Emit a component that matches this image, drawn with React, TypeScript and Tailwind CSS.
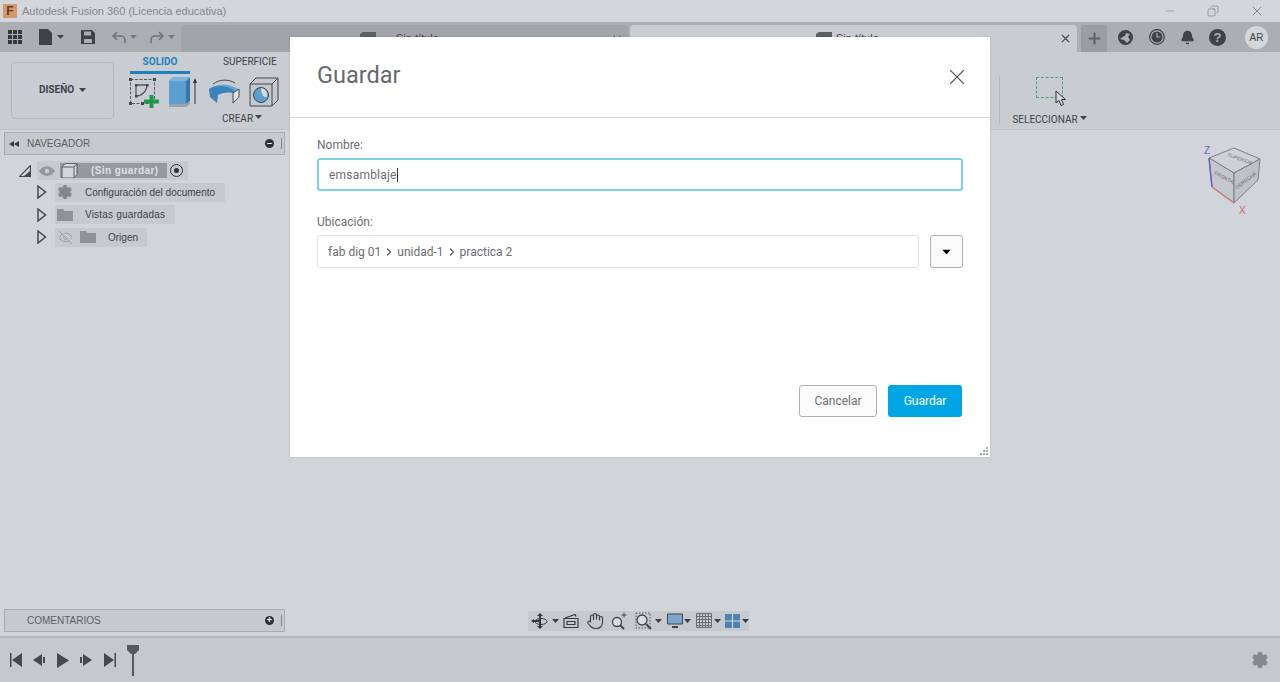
import type { ReactNode } from 'react';
import { Bell, ChevronRight, Copy, EyeOff, Minus, Plus, Settings, X } from 'lucide-react';

const Caret = ({ className = '' }: { className?: string }) => (
  <svg width="7" height="4" viewBox="0 0 7 4" className={className}>
    <path d="M0 0h7L3.500 4z" fill="currentColor" />
  </svg>
);

const Folder = () => (
  <svg width="16" height="12" viewBox="0 0 16 12">
    <path d="M0 0h6l1.500 2H16v10H0z" fill="#8f9296" />
  </svg>
);

const Eye = () => (
  <svg width="16" height="10" viewBox="0 0 16 10">
    <path d="M0 5c4-6.500 12-6.500 16 0-4 6.500-12 6.500-16 0z" fill="#96999d" />
    <circle cx="8" cy="5" r="2.200" fill="#c9ccd0" />
  </svg>
);

const Expander = () => (
  <svg width="10" height="14" viewBox="0 0 10 14" className="shrink-0">
    <path d="M1 1l7.500 6L1 13z" fill="none" stroke="#45484c" strokeWidth="1.500" />
  </svg>
);

const TabIcon = () => (
  <svg width="16" height="13" viewBox="0 0 16 13">
    <path d="M0 2l3-2h13v11l-2 2H0z" fill="#5c5f63" />
  </svg>
);

function TreeRow({ icon, label, labelClass }: { icon: ReactNode; label: string; labelClass: string }) {
  return (
    <div className="flex items-center h-[22.500px] pl-[37px]">
      <Expander />
      <div className="ml-[8px] h-[19px] flex items-center bg-[#c6c9cd] text-[10px] text-[#3f4246]">
        {icon}
        <span className={labelClass}>{label}</span>
      </div>
    </div>
  );
}

function Panel({ title, sign, back }: { title: string; sign: string; back?: boolean }) {
  return (
    <div className="mx-[4px] w-[281px] h-[23px] flex items-center bg-[#c6c9cd] border border-[#a9acb0] text-[10px] text-[#5c5f63]">
      <span className="w-[22px] pl-[4px] flex">
        {back && (
          <svg width="10" height="6" viewBox="0 0 10 6">
            <path d="M5 0v6L0 3zM10 0v6L5 3z" fill="#3a3d40" />
          </svg>
        )}
      </span>
      <span className="flex-1">{title}</span>
      <span className="w-[9px] h-[9px] rounded-full bg-[#2f3235] text-white text-[9px] leading-[8px] text-center font-bold">{sign}</span>
      <span className="w-[1px] h-[11px] ml-[7px] mr-[2px] bg-[#85888c]" />
    </div>
  );
}

function ViewIcons() {
  return (
    <div className="flex items-center h-[20px] w-[221px] bg-[#c6c9cd] pl-[2px] text-[#3a3d40]">
      <svg width="20" height="18" viewBox="0 0 20 18">
        <path d="M10 1l3 3h-2v10h2l-3 3-3-3h2V4H7z" fill="#33363a" />
        <path d="M1 9l3-2v1h6v2H4v1z" fill="#33363a" />
        <ellipse cx="11" cy="9.500" rx="6" ry="3" fill="none" stroke="#33363a" />
      </svg>
      <Caret className="ml-[2px]" />
      <svg width="16" height="15" viewBox="0 0 16 15" className="ml-[4px]">
        <path d="M1 5.500h14v9H1zM4 8.500h8v3H4zM2 5l10-3.500 1 2" fill="none" stroke="#3a3d40" strokeWidth="1.200" />
      </svg>
      <svg width="18" height="18" viewBox="0 0 24 24" className="ml-[7px]" fill="none" stroke="#3a3d40" strokeWidth="1.500">
        <path d="M18 11V6a2 2 0 0 0-4 0M14 10V4a2 2 0 0 0-4 0v2M10 10.500V6a2 2 0 0 0-4 0v8M18 8a2 2 0 1 1 4 0v6a8 8 0 0 1-8 8h-2c-3 0-4-1-6-3l-3.500-4a2 2 0 0 1 3-2.500L6 14" />
      </svg>
      <svg width="18" height="18" viewBox="0 0 18 18" className="ml-[6px]" fill="none">
        <circle cx="7" cy="10" r="4.500" fill="#d8dee4" stroke="#44474b" strokeWidth="1.300" />
        <path d="M10 13l4 4" stroke="#44474b" strokeWidth="2" />
        <path d="M11.500 3h5M14 .5v5" stroke="#44474b" strokeWidth="1" />
      </svg>
      <svg width="18" height="18" viewBox="0 0 18 18" className="ml-[7px]" fill="none">
        <path d="M1 1h14v15H1z" stroke="#55585c" strokeDasharray="1.500 1.500" />
        <circle cx="7" cy="8" r="5" fill="#d8dee4" stroke="#44474b" strokeWidth="1.300" />
        <path d="M11 12l5 5" stroke="#44474b" strokeWidth="2" />
      </svg>
      <Caret className="ml-[2px]" />
      <svg width="16" height="16" viewBox="0 0 16 16" className="ml-[5px]">
        <path d="M.500 1h15v10H.500z" fill="#7fa6cc" stroke="#44474b" />
        <path d="M5 14h6" stroke="#44474b" strokeWidth="2" />
      </svg>
      <Caret className="ml-[1px]" />
      <svg width="16" height="15" viewBox="0 0 16 15" className="ml-[5px]">
        <path d="M.500.500h15v14H.500zM3.500 0v15M6.500 0v15M9.500 0v15M12.500 0v15M0 3.500h16M0 6.500h16M0 9.500h16M0 12.500h16" fill="none" stroke="#6b6e72" />
      </svg>
      <Caret className="ml-[2px]" />
      <svg width="15" height="14" viewBox="0 0 15 14" className="ml-[4px]">
        <rect width="15" height="14" fill="#4d82b8" />
        <path d="M7.500 0v14M0 7h15" stroke="#d5d8dc" strokeWidth="1.200" />
      </svg>
      <Caret className="ml-[2px]" />
    </div>
  );
}

export default function App() {
  return (
    <div className="relative w-[1280px] h-[682px] flex flex-col overflow-hidden bg-[#d1d4d8] font-['Liberation_Sans',sans-serif]">
      {/* Window title */}
      <header className="h-[22px] shrink-0 flex items-center bg-[#d3d6da] text-[#85888c]">
        <span className="ml-[3px] w-[14px] h-[14px] bg-[#d29a69] text-[#5f3d20] text-[12px] leading-[14px] font-bold text-center">F</span>
        <span className="ml-[5px] flex-1 text-[11px]">Autodesk Fusion 360 (Licencia educativa)</span>
        <Minus size={14} strokeWidth={1} className="text-[#85888c]" />
        <Copy size={12} strokeWidth={1} className="ml-[30px] text-[#5c5f63] -scale-x-100" />
        <X size={16} strokeWidth={1} className="ml-[30px] mr-[15px] text-[#5c5f63]" />
      </header>

      {/* Quick access and tabs */}
      <div className="h-[30px] shrink-0 flex items-center bg-[#acafb2] text-[#3f4246]">
        <div className="ml-[8px] w-[14px] h-[14px] grid grid-cols-3 gap-[1px]">
          {Array.from({ length: 9 }).map((_, i) => (
            <span key={i} className="bg-[#34373a]" />
          ))}
        </div>
        <svg width="14" height="16" viewBox="0 0 14 16" className="ml-[17px]">
          <path d="M0 0h9l4 4v12H0z" fill="#3f4246" />
        </svg>
        <Caret className="ml-[4px]" />
        <svg width="14" height="14" viewBox="0 0 14 14" className="ml-[17px]">
          <path d="M0 0h11l3 3v11H0zM3 1.500v4h7v-4zM3 9v4h8V9z" fill="#3f4246" fillRule="evenodd" />
        </svg>
        <svg width="14" height="12" viewBox="0 0 14 12" className="ml-[17px]" fill="none" stroke="#6d7074" strokeWidth="1.500">
          <path d="M5 1L1 5l4 4M1 5h8a4 4 0 0 1 4 4v3" />
        </svg>
        <Caret className="ml-[4px] text-[#77797d]" />
        <svg width="14" height="12" viewBox="0 0 14 12" className="ml-[13px]" fill="none" stroke="#6d7074" strokeWidth="1.500">
          <path d="M9 1l4 4-4 4M13 5H5a4 4 0 0 0-4 4v3" />
        </svg>
        <Caret className="ml-[4px] text-[#77797d]" />

        <div className="ml-[6px] self-end h-[27px] w-[447px] rounded-t-[4px] bg-[#a1a4a8] flex items-center pr-[5px] text-[11px] text-[#45484c]">
          <span className="ml-[179px] flex"><TabIcon /></span>
          <span className="ml-[20px] flex-1">Sin título</span>
          <X size={12} className="text-[#4a4d50]" />
        </div>
        <div className="ml-[2px] self-end h-[27px] w-[447px] rounded-t-[4px] bg-[#c9ccd0] flex items-center pr-[5px] text-[11px] text-[#45484c]">
          <span className="ml-[186px] flex"><TabIcon /></span>
          <span className="ml-[4px] flex-1">Sin título</span>
          <X size={13} className="text-[#4a4d50]" />
        </div>
        <div className="ml-[4px] self-end h-[27px] w-[26px] rounded-t-[3px] bg-[#9a9da1] flex items-center justify-center">
          <Plus size={17} strokeWidth={3} className="text-[#5f6266]" />
        </div>
        <svg width="15" height="15" viewBox="0 0 15 15" className="ml-[11px]">
          <circle cx="7.500" cy="7.500" r="7.500" fill="#3f4246" />
          <path d="M2 9c2-1 3-3 5-3l1-3 4 1-2 3 2 3-3 3-3-3z" fill="#acafb2" />
        </svg>
        <svg width="16" height="16" viewBox="0 0 16 16" className="ml-[16px]">
          <circle cx="8" cy="8" r="7.300" fill="none" stroke="#3f4246" strokeWidth="1.200" />
          <circle cx="8" cy="8" r="5.500" fill="#3f4246" />
          <path d="M8 4v4h3.500" fill="none" stroke="#acafb2" strokeWidth="1.200" />
        </svg>
        <Bell size={15} fill="#3f4246" className="ml-[15px]" />
        <span className="ml-[14px] w-[17px] h-[17px] rounded-full bg-[#3f4246] text-[#acafb2] text-[13px] leading-[17px] font-bold text-center">?</span>
        <span className="ml-[19px] w-[23px] h-[23px] rounded-full bg-[#d3d6da] text-[10px] leading-[23px] text-center text-[#3f4246]">AR</span>
      </div>

      {/* Ribbon */}
      <div className="h-[78px] shrink-0 flex bg-[#c9ccd0] border-b border-[#c0c3c7] text-[#3f4246]">
        <button className="ml-[11px] mt-[10px] w-[103px] h-[57px] pb-[2px] border border-[#b4b7bb] rounded-[4px] flex items-center justify-center gap-[5px] text-[10px] font-['Roboto',sans-serif] font-bold">
          DISEÑO
          <Caret />
        </button>
        <div className="ml-[16px] w-[160px] flex flex-col font-['Roboto',sans-serif]">
          <div className="h-[22px] shrink-0 flex text-[10px] leading-[20px] whitespace-nowrap">
            <span className="w-[60px] shrink-0 text-center text-[#1f82bf] font-bold border-b-[3px] border-[#1f82bf]">SOLIDO</span>
            <span className="ml-[33px] shrink-0 text-[#3f4246]">SUPERFICIE</span>
          </div>
          <div className="flex items-center h-[36px] shrink-0">
            <svg width="31" height="31" viewBox="0 0 31 31" fill="none" className="ml-[-2px]">
              <path d="M2.500 2.500h24v24h-24z" stroke="#55585c" strokeDasharray="3 1.500" />
              <path d="M1 1h3v3H1zM25 1h3v3h-3zM1 25h3v3H1zM13 25h3v3h-3z" fill="#45484c" />
              <path d="M8 8h11M8 8v11M19 8c0 6-5 11-11 11" stroke="#55585c" strokeWidth="1.300" />
              <path d="M7 7h2.500v2.500H7zM18 7h2.500v2.500H18zM7 18h2.500v2.500H7z" fill="#45484c" />
              <path d="M21.500 18h4v4.500H31v4h-5.500V31h-4v-4.500H16v-4h5.500z" fill="#1e9a4b" />
            </svg>
            <svg width="30" height="30" viewBox="0 0 30 30" className="ml-[10px]">
              <path d="M0 4l4-4h17v24l-4 3H0z" fill="#5d9ed1" />
              <path d="M17 4l4-4v24l-4 3z" fill="#3976a8" />
              <path d="M0 4h17l4-4H4z" fill="#79b3de" />
              <path d="M0 27h17l4-3v3l-4 3H0z" fill="#9ea1a5" />
              <path d="M26 27V3" stroke="#2f3235" />
              <path d="M24 6l2-5 2 5z" fill="#2f3235" />
            </svg>
            <svg width="32" height="28" viewBox="0 0 32 28" className="ml-[9px]">
              <path d="M1 11c8-6 20-6 29 0l-4 4c-6-3-13-3-18 0l-6 1z" fill="#6aa6d6" />
              <path d="M1 11l1 8 7 6 1-8c5-3 11-3 16-2l0-3c-8-5-18-5-25-1z" fill="#3d83bb" />
              <path d="M25 15l6-4v8l-6 6z" fill="#dfe2e5" stroke="#45484c" />
              <path d="M5 6c7-5 15-5 22-1" fill="none" stroke="#45484c" />
            </svg>
            <svg width="30" height="30" viewBox="0 0 30 30" className="ml-[9px]">
              <path d="M1 7l6-6h22v22l-6 6H1z" fill="#c4c7cb" stroke="#45484c" />
              <path d="M1 7h22v22M23 7l6-6" fill="none" stroke="#45484c" />
              <circle cx="12" cy="18" r="7.500" fill="#5d9ed1" stroke="#45484c" />
              <path d="M12 11a7 7 0 0 1 6 9c-4 1-6-4-6-9z" fill="#d5d8dc" />
            </svg>
          </div>
          <div className="mt-[1px] ml-[92px] flex items-center gap-[2px] text-[10px] leading-[15px]">
            CREAR
            <Caret className="-mt-[3px]" />
          </div>
        </div>
        <div className="flex-1" />
        <div className="mt-[24px] h-[48px] w-[1px] bg-[#b4b7bb]" />
        <div className="ml-[12px] mr-[193px] w-[75px] flex flex-col items-center font-['Roboto',sans-serif]">
          <div className="relative shrink-0 mt-[25px] h-[21px] w-[27px] border border-dashed border-[#4ba673]">
            <svg width="12" height="17" viewBox="0 0 12 17" className="absolute left-[18px] top-[12px]">
              <path d="M1 1v12l3-2.500 2 5 2.500-1-2-5h4z" fill="#d3d6da" stroke="#2f3235" />
            </svg>
          </div>
          <div className="mt-[14px] flex items-center gap-[2px] text-[10px] leading-[15px]">
            SELECCIONAR
            <Caret className="-mt-[3px]" />
          </div>
        </div>
      </div>

      {/* Canvas */}
      <main className="relative flex-1 flex flex-col min-h-0 pt-[2px] pb-[4px]">
        <Panel title="NAVEGADOR" sign="–" back />
        <div className="mt-[5px] text-[#3f4246]">
          <div className="flex items-center h-[21px] pl-[19px]">
            <svg width="12" height="12" viewBox="0 0 12 12">
              <path d="M11.500.500v11H.500z" fill="none" stroke="#45484c" strokeWidth="1.200" />
              <path d="M11 6v5H5z" fill="#45484c" />
            </svg>
            <div className="ml-[6px] h-[19px] flex items-center bg-[#c6c9cd]">
              <span className="ml-[2px] flex"><Eye /></span>
              <div className="ml-[5px] w-[107px] h-[15px] flex items-center bg-[#96999d] text-[10px] font-bold text-[#dfe1e4] tracking-[0.4px]">
                <svg width="17" height="15" viewBox="0 0 17 15" className="ml-[1px] shrink-0">
                  <path d="M1 4l3-3.500h12v11l-3 3.500H1z" fill="#d3d6da" stroke="#5c5f63" />
                  <path d="M1 4h12v10.500M13 4l3-3.500" fill="none" stroke="#5c5f63" />
                </svg>
                <span className="ml-[13px]">(Sin guardar)</span>
              </div>
              <span className="ml-[3px] mr-[5px] w-[13px] h-[13px] rounded-full border border-[#2f3235] flex items-center justify-center">
                <span className="w-[5px] h-[5px] rounded-full bg-[#2f3235]" />
              </span>
            </div>
          </div>
          <TreeRow
            icon={<Settings size={16} fill="#85888c" stroke="#85888c" className="ml-[2px]" />}
            label="Configuración del documento"
            labelClass="ml-[12px] mr-[10px]"
          />
          <TreeRow
            icon={<span className="ml-[2px] flex"><Folder /></span>}
            label="Vistas guardadas"
            labelClass="ml-[12px] mr-[10px] tracking-[0.2px]"
          />
          <TreeRow
            icon={
              <>
                <EyeOff size={15} strokeWidth={1} className="ml-[3px] text-[#85888c]" />
                <span className="ml-[7px] flex"><Folder /></span>
              </>
            }
            label="Origen"
            labelClass="ml-[12px] mr-[9px]"
          />
        </div>

        <div className="flex-1" />
        <div className="flex items-center">
          <Panel title="COMENTARIOS" sign="+" />
          <div className="ml-[239px]">
            <ViewIcons />
          </div>
        </div>

        {/* View cube */}
        <svg width="70" height="76" viewBox="0 0 70 76" className="absolute right-[10px] top-[14px]">
          <path d="M9 14L34 4l26 11-26 14z" fill="#cfd2d5" stroke="#7c7f83" />
          <path d="M9 14l25 15v30L12 43z" fill="#c4c7cb" stroke="#7c7f83" />
          <path d="M34 29l26-14-2 21-24 23z" fill="#bec1c5" stroke="#7c7f83" />
          <path d="M9 14l3 29" stroke="#5c67c9" strokeWidth="1.500" />
          <path d="M12 43l22 16" stroke="#cc7f7f" strokeWidth="1.500" />
          <text x="27" y="12" fontSize="5" fill="#6b6e72" transform="rotate(20 27 12)">SUPERIOR</text>
          <text x="14" y="30" fontSize="5" fill="#6b6e72" transform="rotate(28 14 30)">FRONTAL</text>
          <text x="37" y="45" fontSize="5" fill="#6b6e72" transform="rotate(-36 37 45)">DERECHA</text>
          <text x="4" y="10" fontSize="10" fill="#5c67c9">Z</text>
          <text x="39" y="70" fontSize="10" fill="#c96a6a">X</text>
        </svg>
      </main>

      {/* Timeline */}
      <footer className="h-[46px] shrink-0 flex items-center bg-[#c6c9cc] border-t-2 border-[#b4b7bb] text-[#45484c]">
        <svg width="12" height="14" viewBox="0 0 12 14" className="ml-[10px]" fill="currentColor">
          <path d="M0 0h1.500v14H0zM12 0v14L2 7z" />
        </svg>
        <svg width="12" height="12" viewBox="0 0 12 12" className="ml-[11px]" fill="currentColor">
          <path d="M9 0v12L0 6zM10 3h2v6h-2z" />
        </svg>
        <svg width="12" height="15" viewBox="0 0 12 15" className="ml-[12px]" fill="currentColor">
          <path d="M0 0l12 7.500L0 15z" />
        </svg>
        <svg width="12" height="12" viewBox="0 0 12 12" className="ml-[11px]" fill="currentColor">
          <path d="M3 0v12l9-6zM0 3h2v6H0z" />
        </svg>
        <svg width="12" height="14" viewBox="0 0 12 14" className="ml-[12px]" fill="currentColor">
          <path d="M10.500 0H12v14h-1.500zM0 0v14l10-7z" />
        </svg>
        <svg width="12" height="31" viewBox="0 0 12 31" className="ml-[11px] mt-[1px]" fill="#55585c">
          <path d="M0 0h12v5l-4 4H7v22H5V9H4L0 5z" />
        </svg>
        <span className="flex-1" />
        <Settings size={18} fill="#85888c" stroke="#85888c" className="mr-[11px]" />
      </footer>

      {/* Save dialog */}
      <div className="absolute left-[290px] top-[37px] w-[700px] h-[420px] flex flex-col bg-white text-[#6b6e72] text-[12px] shadow-[0_0_2px_rgba(0,0,0,0.15)]">
        <div className="h-[81px] shrink-0 flex items-center justify-between border-b border-[#d6d6d6] pl-[27px] pr-[20px]">
          <h2 className="text-[23.500px] leading-none -mt-[3px] font-['Roboto',sans-serif] text-[#66696d]">Guardar</h2>
          <X size={26} strokeWidth={1} className="text-[#55585c]" />
        </div>
        <div className="px-[27px] pt-[20px] flex-1 flex flex-col font-['Roboto',sans-serif]">
          <label className="leading-[14px]">Nombre:</label>
          <div className="mt-[6px] h-[33px] w-[646px] flex items-center rounded-[3px] border-2 border-[#7fd0ee] pl-[10px]">
            <span className="tracking-[0.2px]">emsamblaje</span>
            <span className="w-[1px] h-[14px] bg-[#2f3235]" />
          </div>
          <label className="mt-[24px] leading-[14px]">Ubicación:</label>
          <div className="mt-[6px] flex justify-between w-[646px]">
            <div className="h-[33px] w-[602px] flex items-center rounded-[3px] border border-[#e2e2e2] pl-[10px]">
              fab dig 01
              <ChevronRight size={12} strokeWidth={2.500} className="mx-[2px] text-[#55585c]" />
              unidad-1
              <ChevronRight size={12} strokeWidth={2.500} className="mx-[2px] text-[#55585c]" />
              practica 2
            </div>
            <button className="h-[33px] w-[33px] flex items-center justify-center rounded-[3px] border border-[#b0b0b0] bg-[#fafafa] text-black">
              <Caret className="scale-125" />
            </button>
          </div>
          <div className="mt-[117px] w-[645px] flex justify-end gap-[11px]">
            <button className="h-[32px] w-[78px] rounded-[3px] border border-[#b0b0b0] bg-[#fafafa]">Cancelar</button>
            <button className="h-[32px] w-[74px] rounded-[3px] bg-[#00a5e3] text-white">Guardar</button>
          </div>
        </div>
        <svg width="9" height="9" viewBox="0 0 9 9" className="absolute right-[1px] bottom-[1px]" fill="#a9acb0">
          <path d="M6 0h2v2H6zM3 3h2v2H3zM6 3h2v2H6zM0 6h2v2H0zM3 6h2v2H3zM6 6h2v2H6z" />
        </svg>
      </div>
    </div>
  );
}
